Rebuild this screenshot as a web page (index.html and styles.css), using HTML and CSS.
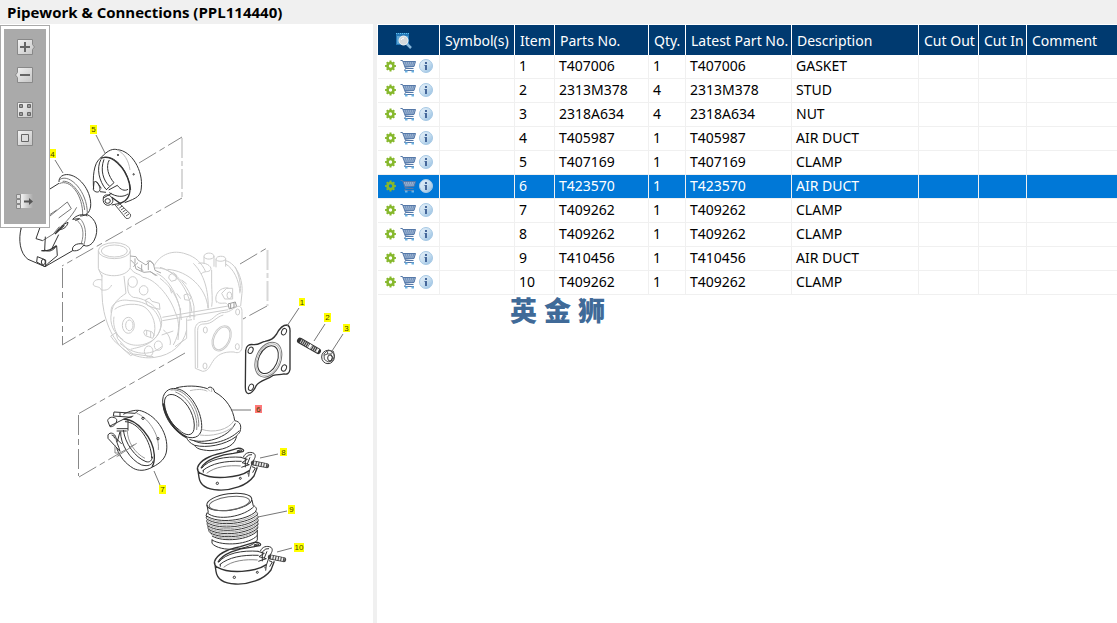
FILE: index.html
```html
<!DOCTYPE html>
<html lang="en">
<head>
<meta charset="utf-8">
<title>Pipework &amp; Connections (PPL114440)</title>
<link rel="stylesheet" href="styles.css">
</head>
<body>
<svg class="defs" aria-hidden="true">
  <defs>
    <linearGradient id="g-info" x1="0" y1="0" x2="1" y2="1"><stop offset="0" stop-color="#e8f2fa"/><stop offset=".5" stop-color="#c9dff0"/><stop offset="1" stop-color="#8fbbe0"/></linearGradient>
    <linearGradient id="g-tool" x1="0" y1="0" x2="1" y2="1"><stop offset="0" stop-color="#f4f4f4"/><stop offset="1" stop-color="#c4c4c4"/></linearGradient>
    <linearGradient id="g-fade"><stop offset="0" stop-color="#eee"/><stop offset="1" stop-color="#aaa"/></linearGradient>
    <symbol id="i-gear" viewBox="0 0 12 12">
      <circle cx="6" cy="6" r="3" fill="none" stroke="#86b82c" stroke-width="2.6"/>
      <path d="M6 .6V2.400M6 9.600v1.800M.6 6h1.800M9.600 6h1.800M2.200 2.200l1.200 1.200M8.600 8.600l1.200 1.200M2.200 9.800l1.200-1.200M8.600 3.400l1.200-1.200" stroke="#86b82c" stroke-width="2"/>
    </symbol>
    <symbol id="i-cart" viewBox="0 0 16 14">
      <path d="M3 2h12.500L14 7.500 5 8.500z" fill="#6f8fba"/>
      <path d="M4 4h11M4.500 6h10" stroke="#d4e0ee" stroke-width=".8" stroke-dasharray="1.200 .8"/>
      <path d="M.5 1.500H2.500L5.500 9.500H13.500M3 2.500h12.500L14 7.500 5 8" fill="none" stroke="#5578a8"/>
      <path d="M5.500 9.500L4.500 11.500H14" fill="none" stroke="#5578a8"/>
      <path d="M5 12.500h2.500M11.500 12.500h2.500" stroke="#6cb4e4" stroke-width="2"/>
    </symbol>
    <symbol id="i-info" viewBox="0 0 14 14">
      <circle cx="7" cy="7" r="6.500" fill="url(#g-info)" stroke="#a6c8e4"/>
      <path d="M6 3h2v2H6zM5.500 6H8v5H6V7h-.5z" fill="#45679a"/>
    </symbol>
  </defs>
</svg>

<header class="titlebar"><h1 class="title">Pipework &amp; Connections (PPL114440)</h1></header>

<main class="workspace">
  <section class="diagram" aria-label="Exploded view">
    <svg class="drawing" width="373" height="598" viewBox="0 25 373 598" fill="none">
      <!-- assembly axes -->
      <g stroke="#888" stroke-dasharray="20 4 6 4">
        <path d="M139 163L182 137M182 198L62 266M105 320L62 345M240 264l27-16M267 306l-24 13M185 353L78 414M79 477l58-34"/>
        <path d="M62.500 268v77M78.500 415v61"/>
      </g>
      <path d="M182 138v60M267.500 250v56" stroke="#d8d8d8" stroke-width="2" stroke-dasharray="20 3 5 3"/>

      <!-- air duct 4 -->
      <g transform="translate(0 110) scale(.3333)" stroke="#333" stroke-width="3">
        <path d="M145 240L177 220M177 216C176 200 190 192 206 194C245 200 275 250 272 288C270 308 258 318 240 318"/>
        <path d="M180 208C210 190 262 245 262 310M178 221C210 205 250 255 248 318M188 214C215 210 250 255 254 300" stroke="#777"/>
        <path d="M64 352C54 390 60 430 84 448L135 470L218 422C235 425 245 415 252 404"/>
        <path d="M145 243L100 285C78 305 66 330 62 360M145 317L170 300M120 352L150 318L202 276L214 296L176 324M160 372C190 345 215 320 230 292M128 392L160 372L178 350" stroke="#777"/>
        <path d="M258 312C290 325 298 360 283 390C276 404 262 412 252 406M226 332L240 326"/>
        <path d="M240 326C255 340 262 370 252 404M232 332C248 345 254 370 244 400" stroke="#888"/>
        <path d="M262 318C248 310 230 315 218 328L238 326M170 366C180 350 192 342 204 337C202 350 190 358 180 359M136 380L134 420C150 428 160 420 170 408L172 437L142 462L135 470L110 456L112 440L137 450V470M120 352L108 386L128 392M176 374L156 415M218 422C214 408 230 398 250 402"/>
        <path d="M165 372l28-26M124 422C145 424 155 418 170 407" stroke-width="4"/>
        <ellipse cx="130" cy="456" rx="6" ry="8"/>
      </g>

      <!-- clamp 5 -->
      <g transform="translate(0 110) scale(.3333)" stroke="#333" stroke-width="3">
        <path d="M302 144C325 118 340 116 352 119C395 122 430 182 424 234C422 258 412 264 374 278"/>
        <path d="M352 120C372 130 386 150 390 180" stroke="#bbb"/>
        <path d="M302 144C280 158 278 205 281 238"/>
        <path d="M302 145C335 132 375 170 388 220C394 252 385 272 360 280L335 262" stroke-width="4"/>
        <path d="M303 148C288 175 298 215 318 238M312 148C300 180 310 212 328 228M328 150C316 170 326 200 342 218L318 240M326 240L352 226C362 240 374 244 384 238M328 248C350 262 370 262 384 252M312 142C350 135 388 190 392 240"/>
        <path d="M282 218C286 205 302 230 300 240C296 252 280 244 280 238zM290 215L304 235M310 264C310 252 328 252 335 262C344 274 335 286 322 286C312 284 308 275 310 264zL335 250"/>
        <ellipse cx="323" cy="273" rx="8" ry="7"/><path d="M300 245l18 2M335 285l30-6"/>
        <path d="M344 283L378 325C388 328 394 320 391 312L358 280M352 287l8-5M358 294l9-6M363 300l9-6M368 306l9-6M373 312l9-6M378 318l9-6" stroke="#555"/>
        <circle cx="354" cy="135" r="2"/><circle cx="401" cy="193" r="2"/>
      </g>

      <!-- turbocharger -->
      <g transform="translate(80 230) scale(.3333)" stroke="#ccc" stroke-width="3">
        <ellipse cx="103" cy="62" rx="48" ry="24"/><ellipse cx="103" cy="63" rx="39" ry="18"/>
        <path d="M55 62V115C65 145 140 145 151 112V62M66 134C66 170 64 210 72 245C80 280 92 310 108 330C125 365 175 390 225 382C275 375 310 345 320 300M56 118L66 140M151 115C165 135 180 130 188 142C225 145 270 200 285 245C300 275 300 310 280 345M66 150C48 145 38 155 40 165C45 172 60 168 64 180C80 182 88 178 95 165M132 138L138 190C115 205 98 220 94 250C88 280 100 310 130 330"/>
        <path d="M94 250C88 220 120 205 150 212C200 212 235 240 243 285C240 330 195 350 160 345C125 340 95 305 102 260M104 238C125 220 175 218 195 232C220 250 232 290 220 320M152 358C180 350 235 345 245 280C245 235 200 205 160 202C145 195 140 180 145 158"/>
        <ellipse cx="145" cy="286" rx="18" ry="24"/><ellipse cx="148" cy="286" rx="11" ry="16"/>
        <ellipse cx="158" cy="156" rx="14" ry="16"/><ellipse cx="191" cy="181" rx="13" ry="14"/><ellipse cx="206" cy="364" rx="13" ry="16"/><ellipse cx="235" cy="347" rx="12" ry="14"/>
        <path d="M195 300l20 5 8 10-5 10-22-8-5-10zM200 300v16M212 305v16M196 210l12-6 8 10 22 6 2 18-18-4-20-8zM245 315l35-12M250 300C265 310 275 330 270 345"/>
        <path d="M150 78l18 2 6 10 24 15 12-12 10 8 5 20 18 8M152 90l12 12 4 15 24 10 20-2 15 12M165 85v15M185 103v20M205 95v25M160 110l14-12M172 110l18 12M210 125l22 12M200 95q12-8 20 8" stroke="#aaa"/>
        <path d="M222 108C240 72 280 58 318 72C345 80 365 98 377 125M225 114C275 110 330 165 342 230V270M240 112C290 125 330 185 335 245M262 118C325 122 380 175 384 235M340 100C365 125 385 165 385 235M230 130C265 145 300 200 304 270M240 145C275 170 296 210 302 245"/>
        <path d="M268 136l12-8 10 8-2 14-14 4-8-10zM312 195l12-4 10 10-6 10-14-2zM270 175l5 15M290 190l12 16M305 150l15 12M320 265v60l-35 25M302 235l-8 95M330 215v50"/>
        <path d="M355 100C375 95 395 108 393 118C385 130 375 120 363 132M372 80V102M402 78V110M372 80c0-14 28-14 30-2c0 12-28 12-30 2M408 88V112M437 86V110M408 88c0-12 28-12 29-2c0 10-28 10-29 2M437 92C470 100 490 150 486 190L482 228M437 102C460 115 478 150 480 190M465 110c12 25 18 50 16 75M395 120v40c0 25 4 50 0 70M410 218C400 195 420 170 445 174M412 215C418 225 440 215 440 222M425 190l15-15h18v32h-24z"/>
        <ellipse cx="448" cy="196" rx="7" ry="10"/>
        <path d="M247 262L445 228M247 272L445 239M320 262l12-6 14 3M322 271l14-2"/>
        <path d="M444 222l22-6 4 14-22 7zM452 222v14M462 218v14" stroke="#999"/>
        <path d="M345 300C345 285 355 275 370 275C400 275 400 255 425 248C450 248 455 238 470 230C480 226 486 232 486 245V350C486 365 475 372 462 366C430 364 410 375 398 395C388 410 385 424 368 424L346 415zM353 302V414M353 302C353 288 360 282 372 282C400 282 405 262 430 255"/>
        <ellipse cx="425" cy="325" rx="26" ry="40" transform="rotate(25 425 325)"/><ellipse cx="425" cy="325" rx="22" ry="36" transform="rotate(25 425 325)"/>
        <ellipse cx="376" cy="300" rx="6" ry="9"/><ellipse cx="473" cy="246" rx="6" ry="9"/><ellipse cx="375" cy="408" rx="6" ry="9"/><ellipse cx="472" cy="350" rx="6" ry="9"/>
        <path d="M92 318l16-10 5 18 32 35 15 12-8 4-50-45zM160 372l60 8M120 340C160 375 210 380 245 350"/>
      </g>

      <!-- gasket, stud and nut -->
      <g transform="translate(230 280) scale(.3333)" stroke="#333" stroke-width="3">
        <path d="M47 212C48 197 58 192 70 194C90 195 92 186 105 184C125 180 130 176 140 162C150 142 160 135 171 135C180 138 181 146 180 158V268C178 280 172 284 162 282C150 286 144 282 130 286C112 300 90 300 78 318C72 332 64 340 55 341C48 340 46 332 46 322z" stroke-width="4"/>
        <ellipse cx="115" cy="239" rx="37" ry="55" transform="rotate(24 115 239)" stroke="#777"/><ellipse cx="114" cy="239" rx="28" ry="44" transform="rotate(24 114 239)"/><ellipse cx="115" cy="239" rx="33" ry="50" transform="rotate(24 115 239)" stroke="#bbb"/>
        <ellipse cx="62" cy="211" rx="7" ry="10" transform="rotate(24 62 211)"/><ellipse cx="162" cy="155" rx="7" ry="10" transform="rotate(24 162 155)"/><ellipse cx="63" cy="322" rx="7" ry="10" transform="rotate(24 63 322)"/><ellipse cx="162" cy="264" rx="7" ry="10" transform="rotate(24 162 264)"/>
        <path d="M210 182L264 213" stroke-width="18" stroke-linecap="round"/><path d="M212 183L262 212" stroke="#ccc" stroke-width="12" stroke-dasharray="3 3"/><path d="M237 197l6 4M261 211l4 2" stroke="#fff" stroke-width="12"/>
        <ellipse cx="294" cy="231" rx="19" ry="20"/><path d="M282 222l12-12 16 4 4 14-6 14-14 4-11-8zM294 210l-2 12-10 4M310 214l-8 8M292 222l10 0 6 10-6 12" stroke="#555"/><ellipse cx="300" cy="234" rx="7" ry="9"/>
      </g>

      <!-- clamp 7 -->
      <g transform="translate(70 370) scale(.3333)" stroke="#333" stroke-width="3">
        <path d="M160 133C180 122 200 118 215 123C265 140 295 195 290 240C288 265 270 280 248 291C225 304 205 303 190 295C165 280 150 260 140 235"/>
        <path d="M160 148C200 145 250 205 253 255C254 275 250 285 246 291" stroke-width="4"/>
        <path d="M165 155C205 155 245 215 245 265M152 185C150 220 180 270 215 285C235 290 246 285 250 272M160 180C165 220 195 262 228 275C240 278 245 272 248 260"/>
        <path d="M172 182C172 215 195 250 225 265M200 130C230 140 270 190 265 240" stroke="#999"/>
        <path d="M113 152C115 140 132 138 140 148C142 160 130 172 120 170zM120 168L160 148L190 138M114 195C120 184 136 190 138 204C138 214 146 228 150 244L114 205zM125 195q8 0 9 10M132 126L195 130L205 122M132 126L130 138L185 142M150 128v10M140 176h34M140 183h30M174 150v32M138 205L155 222M150 185L142 215"/>
        <path d="M135 225v24h12v10M140 260l60-40" stroke="#888"/><ellipse cx="219" cy="145" rx="4" ry="3"/><ellipse cx="264" cy="206" rx="3" ry="4"/>
      </g>

      <!-- air duct 6 -->
      <g transform="translate(150 370) scale(.3333)" stroke="#333" stroke-width="3">
        <path d="M38 90C40 60 65 50 88 58C125 70 158 130 155 175C152 205 125 208 103 198C65 180 36 130 38 90z"/>
        <path d="M44 90C48 72 65 70 80 78C115 95 138 145 132 178C128 200 105 198 88 180C60 160 40 120 44 90z"/>
        <path d="M62 60C105 52 150 115 146 170M76 66C115 80 145 130 140 180" stroke="#888"/>
        <path d="M40 100C45 140 75 185 110 202" stroke-width="6"/>
        <path d="M78 54C105 46 145 46 172 56C178 48 190 50 194 66C230 85 250 120 254 152C272 155 275 168 270 185C265 195 260 192 258 205C250 232 215 240 180 242C150 240 138 235 134 226C120 220 112 210 110 203M132 212C170 232 235 215 268 182M118 208C160 225 235 205 256 160M134 226C170 235 225 225 258 200"/>
        <path d="M155 178C190 190 235 180 252 152M150 195C185 200 225 190 250 170M120 62C150 55 165 60 172 64M172 56l8 8M185 54v12" stroke="#bbb"/>
      </g>

      <!-- clamps 8 and 10 share one outline -->
      <defs>
        <g id="band" transform="translate(150 370) scale(.3333)" stroke="#333" stroke-width="3">
          <path d="M143 292C150 270 185 255 220 248L262 235C275 234 286 240 278 245L250 250C215 252 165 270 153 295M143 292C140 300 146 308 152 310M143 296L147 322C150 345 170 358 205 360C245 362 290 348 312 318L322 292M152 310C185 330 265 325 298 302" stroke-width="4"/>
          <path d="M155 295C175 268 225 258 275 262M158 302C185 280 225 272 275 274M160 300v8M298 302L296 320"/>
          <path d="M170 310C195 290 235 285 272 288" stroke="#888"/>
          <path d="M280 262C285 248 300 244 312 250C320 258 314 265 306 280L298 304M288 262q8-10 18-8M272 262l20 6-16 10 22 6-24 8M286 262v30M300 262l-8 20M306 290l10 4-8 14M262 242q12-4 14 1l-14 3z"/>
          <path d="M310 279L350 287" stroke="#444" stroke-width="15" stroke-linecap="round"/><path d="M312 279L352 287" stroke="#eee" stroke-width="10" stroke-dasharray="5 3"/>
          <circle cx="202" cy="340" r="3.500"/><circle cx="271" cy="325" r="3"/><path d="M294 308v5"/>
        </g>
      </defs>
      <use href="#band"/><use href="#band" x="17" y="94"/>

      <!-- bellows 9 -->
      <g transform="translate(190 480) scale(.3333)" stroke="#333" stroke-width="3">
        <ellipse cx="118" cy="66" rx="68" ry="25" transform="rotate(-8 118 66)"/><ellipse cx="118" cy="70" rx="61" ry="20" transform="rotate(-8 118 70)" stroke="#666"/>
        <path d="M51 75L55 98M186 60L190 78M51 98C80 125 165 110 193 78M51 98l-3 10M193 78c8 6 8 12 3 16M66 178v12C90 218 180 212 202 180V150"/>
        <path d="M50 108C85 132 170 122 198 94M52 118C90 142 175 130 202 104M52 128C90 152 178 140 203 114M54 138C92 162 178 150 203 124M56 148C94 172 178 160 203 134M60 158C96 180 178 170 203 144M66 168C100 188 178 180 203 152M66 180C100 200 178 194 202 166M50 108c-3 6 0 8 2 10c-3 4-2 8 0 10c-1 5 0 8 2 10c0 5 0 8 2 10c0 5 2 8 4 10M196 94c8 4 8 8 5 12c5 4 4 8 1 10c4 4 3 8 0 10c3 4 3 8 0 10c2 5 2 8-2 12"/>
        <path d="M52 113C88 137 172 126 200 99M52 123C90 147 176 135 203 109M53 133C92 157 178 145 203 119M55 143C94 167 178 155 203 129M58 153C96 176 178 165 203 139M63 163C98 184 178 175 203 148" stroke="#aaa"/>
      </g>

      <!-- callouts -->
      <path d="M96 135l9 18M55 160l8 13M299 308l-12 18M325 324l-11 17M343 334l-11 17M232 410h19M160 485l-6-14M278 454l-18 4M287 511l-29 6M292 548l-15 4" stroke="#777"/>
      <g fill="#ff0">
        <path d="M90 125h7v9h-7zM50 149h6v9h-6zM299 298h6v8h-6zM324 313h7v9h-7zM343 324h7v8h-7zM159 485h7v9h-7zM280 448h7v8h-7zM288 505h7v9h-7zM294 543h10v9h-10z"/>
        <path d="M255 405h7v8h-7z" fill="#f77"/>
      </g>
      <g class="callouts">
        <text x="93.500" y="132">5</text><text x="52.500" y="157">4</text><text x="302" y="305">1</text><text x="327.500" y="320">2</text><text x="346.500" y="331">3</text><text x="258.500" y="412">6</text><text x="162.500" y="492">7</text><text x="283.500" y="455">8</text><text x="291.500" y="512">9</text><text x="299" y="550">10</text>
      </g>
    </svg>

    <div class="toolbar" role="toolbar" aria-label="View">
      <button class="tool" aria-label="Zoom in"><svg viewBox="0 0 18 18"><path d="M1.500 1.500h15v5l2 2.500-2 2.500v5h-15z" fill="url(#g-tool)" stroke="#888"/><path d="M9 4v10M4 9h10" stroke="#666" stroke-width="2"/></svg></button>
      <button class="tool" aria-label="Zoom out"><svg viewBox="0 0 18 18"><path d="M1.500 1.500h15v15h-15v-5L-.5 9l2-2.500z" fill="url(#g-tool)" stroke="#888"/><path d="M4 9h10" stroke="#666" stroke-width="2"/></svg></button>
      <button class="tool tool-group" aria-label="Show all"><svg viewBox="0 0 18 18"><path d="M1.500 1.500h15v15h-15z" fill="url(#g-tool)" stroke="#888"/><path d="M3.500 3.500h3v3h-3zM11.500 3.500h3v3h-3zM3.500 11.500h3v3h-3zM11.500 11.500h3v3h-3z" fill="#999" stroke="#666"/></svg></button>
      <button class="tool" aria-label="Fit"><svg viewBox="0 0 18 18"><path d="M1.500 1.500h15v15h-15z" fill="url(#g-tool)" stroke="#888"/><path d="M5.500 5.500h7v7h-7z" fill="#ddd" stroke="#666"/></svg></button>
      <button class="tool tool-last" aria-label="Hide list"><svg viewBox="0 0 18 18"><path d="M6 2h11v14H6z" fill="url(#g-fade)"/><path d="M.5 2.500h4v4h-4zM.5 7.500h4v4h-4zM.5 12.500h4v4h-4z" fill="#ddd" stroke="#888"/><path d="M5.500 2v14" stroke="#eee"/><path d="M8 9.500h7" stroke="#555" stroke-width="2"/><path d="M13 6l4 3.500-4 3.500z" fill="#555"/></svg></button>
    </div>
  </section>

  <section class="parts">
    <table class="parts-table">
      <colgroup><col class="c-actions"><col class="c-symbols"><col class="c-item"><col class="c-part"><col class="c-qty"><col class="c-latest"><col class="c-desc"><col class="c-out"><col class="c-in"><col></colgroup>
      <thead><tr>
        <th class="find"><button class="icon-btn" aria-label="Find"><svg width="17" height="17" viewBox="0 0 17 17"><path d="M1 1h13v12H1z" fill="#2478b8"/><path d="M1 1.500h13" stroke="#60c0f0" stroke-dasharray="1 1"/><path d="M2 4h11v8H2z" fill="#5ba4d4"/><path d="M11 11l5 5" stroke="#88b8dc" stroke-width="2.500"/><circle cx="8.500" cy="8.500" r="4.500" fill="#d5d9dc" stroke="#f4f4f4"/><path d="M6 8q1-2 3-2" stroke="#fff" fill="none"/></svg></button></th>
        <th>Symbol(s)</th><th>Item</th><th>Parts No.</th><th>Qty.</th><th>Latest Part No.</th><th>Description</th><th>Cut Out</th><th>Cut In</th><th>Comment</th>
      </tr></thead>
      <tbody id="rows"></tbody>
    </table>
    <p class="brand" lang="zh"><span>英</span><span>金</span><span>狮</span></p>
  </section>
</main>
<script src="parts.js"></script>
</body>
</html>
```
FILE: styles.css
```css
* { box-sizing: border-box; }
body {
  margin: 0;
  min-height: 100vh;
  display: flex;
  flex-direction: column;
  background: #fff;
  color: #000;
  font: 14px/20px "Noto Sans", "Open Sans", sans-serif;
}
.defs { position: absolute; width: 0; height: 0; }
.titlebar { padding: 2px 7px; background: #f0f0f0; }
.title { margin: 0; font: 700 15px/20px "Open Sans", "Noto Sans", sans-serif; }
.workspace { flex: 1; display: flex; }
.diagram { position: relative; flex: none; border-right: 4px solid #f0f0f0; padding-top: 1px; }
.drawing { display: block; }
.callouts text { font: 8px "Liberation Sans", sans-serif; fill: #440; text-anchor: middle; }

.toolbar {
  position: absolute;
  top: 1px;
  left: 0;
  width: 50px;
  height: 203px;
  display: flex;
  flex-direction: column;
  align-items: center;
  gap: 10px;
  padding-top: 12px;
  background: #aaa;
  border: 1px solid #aaa;
  box-shadow: inset 0 0 0 3px #fff;
}
.tool { width: 18px; height: 18px; padding: 0; border: 0; background: none; flex: none; }
.tool svg { display: block; width: 18px; height: 18px; overflow: visible; }
.tool-group { margin-top: 7px; }
.tool-last { margin-top: 35px; }

.parts { flex: 1; min-width: 0; padding: 1px 0 0 1px; }
.parts-table { width: 100%; table-layout: fixed; border-collapse: separate; border-spacing: 0; }
.c-actions { width: 62px; }
.c-symbols { width: 75px; }
.c-item { width: 40px; }
.c-part { width: 94px; }
.c-qty { width: 37px; }
.c-latest { width: 106px; }
.c-desc { width: 127px; }
.c-out { width: 60px; }
.c-in { width: 48px; }
th {
  height: 30px;
  padding: 2px 0 0 5px;
  background: #003a70;
  border-right: 1px solid #fff;
  color: #fff;
  font-weight: 400;
  text-align: left;
  white-space: nowrap;
}
td {
  height: 24px;
  padding: 0 0 2px 4px;
  border: solid #f0f0f0;
  border-width: 0 1px 1px 0;
  white-space: nowrap;
}
th:last-child, td:last-child { border-right: 0; }
.find { padding: 0 10px 0 0; }
.icon-btn { display: block; padding: 0; border: 0; background: none; }
.find .icon-btn { margin: 0 auto; }
.icon-btn svg { display: block; }
.actions { display: flex; align-items: center; gap: 3px; padding-left: 2px; }
.selected td { background: #0078d7; color: #fff; }
.brand {
  display: flex;
  gap: 7px;
  margin: 0 0 0 132px;
  color: #406a98;
  font: 900 27px/30px "Noto Sans CJK SC", sans-serif;
}
```
FILE: parts.js
```js
const parts = [
  ["T407006", 1, "GASKET"],
  ["2313M378", 4, "STUD"],
  ["2318A634", 4, "NUT"],
  ["T405987", 1, "AIR DUCT"],
  ["T407169", 1, "CLAMP"],
  ["T423570", 1, "AIR DUCT"],
  ["T409262", 1, "CLAMP"],
  ["T409262", 1, "CLAMP"],
  ["T410456", 1, "AIR DUCT"],
  ["T409262", 1, "CLAMP"]
];
const icon = (id, w, h, label) =>
  `<button class="icon-btn" aria-label="${label}"><svg width="${w}" height="${h}"><use href="#${id}"/></svg></button>`;
document.getElementById("rows").innerHTML = parts.map(([no, qty, name], i) => `
  <tr${i === 5 ? ' class="selected" aria-selected="true"' : ""}>
    <td><div class="actions">${icon("i-gear", 13, 12, "Options")}${icon("i-cart", 16, 14, "Add to cart")}${icon("i-info", 14, 14, "Information")}</div></td>
    <td></td><td>${i + 1}</td><td>${no}</td><td>${qty}</td><td>${no}</td><td>${name}</td><td></td><td></td><td></td>
  </tr>`).join("");
```
